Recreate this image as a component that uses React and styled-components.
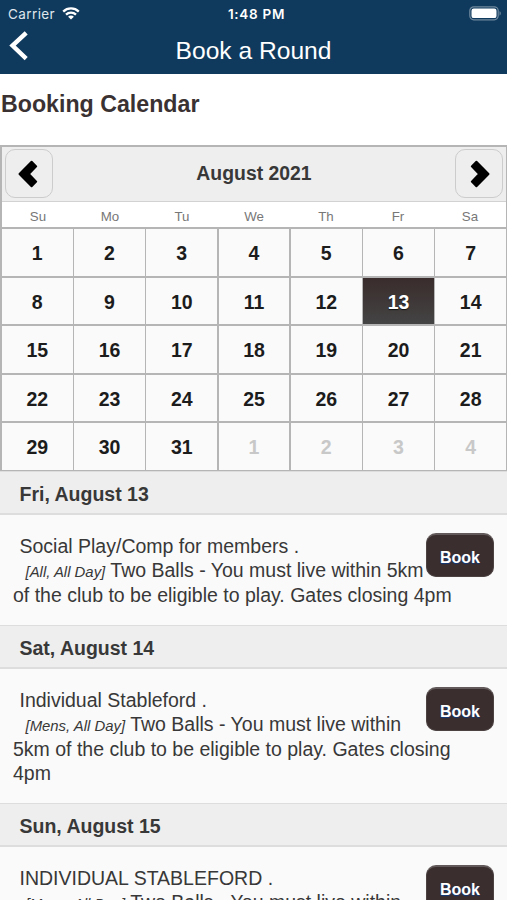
import React from 'react';
import styled, { createGlobalStyle } from 'styled-components';

const GlobalStyle = createGlobalStyle`
  * {
    box-sizing: border-box;
  }

  body {
    margin: 0;
    background: #fff;
    color: #383838;
    font-family: "Liberation Sans", Arial, sans-serif;
    font-size: 19.5px;
    overflow: hidden;
  }
`;

const weekDays = ['Su', 'Mo', 'Tu', 'We', 'Th', 'Fr', 'Sa'];

// 31 days of August and the first 4 days of September
const days = Array.from({ length: 35 }, (_, i) => ({
  number: i < 31 ? i + 1 : i - 30,
  other: i >= 31,
}));

const text = 'Two Balls - You must live within 5km of the club to be eligible to play. Gates closing 4pm';

const events = [
  { date: 'Fri, August 13', title: 'Social Play/Comp for members .', who: '[All, All Day]', text },
  { date: 'Sat, August 14', title: 'Individual Stableford .', who: '[Mens, All Day]', text },
  { date: 'Sun, August 15', title: 'INDIVIDUAL STABLEFORD .', who: '[Mens, All Day]', text },
];

function Wifi() {
  return (
    <svg width="18" height="13" viewBox="0 0 18 13" fill="none" stroke="#fff" strokeWidth="2.3">
      <path d="M1.2 4.6a11.2 11.2 0 0 1 15.6 0" />
      <path d="M4 7.6a7.2 7.2 0 0 1 10 0" />
      <path d="M9 12.6 6.1 9.8a3.9 3.9 0 0 1 5.8 0z" fill="#fff" stroke="none" />
    </svg>
  );
}

function Battery() {
  return (
    <svg width="33" height="15" viewBox="0 0 33 15">
      <rect x="0.8" y="0.8" width="28.4" height="13" rx="4" fill="none" stroke="#fff" strokeOpacity="0.4" strokeWidth="1.2" />
      <rect x="2.5" y="2.5" width="25" height="9.6" rx="2.2" fill="#fff" />
      <path d="M30.6 5.2v4.2c1.4-.5 1.4-3.7 0-4.2z" fill="#fff" fillOpacity="0.5" />
    </svg>
  );
}

function Arrow({ next }) {
  return (
    <svg width="20" height="28" viewBox="0 0 20 28" fill="#000" stroke="#000" strokeWidth="2" strokeLinejoin="round">
      <path
        d={next
          ? 'M18.5 14 6.4 1.8 1.8 6.4 9.2 14 1.8 21.6 6.4 26.2z'
          : 'M1.5 14 13.6 1.8 18.2 6.4 10.8 14 18.2 21.6 13.6 26.2z'}
      />
    </svg>
  );
}

function App() {
  return (
    <Page>
      <GlobalStyle />
      <Header>
        <StatusBar>
          <Carrier>
            Carrier <Wifi />
          </Carrier>
          <Clock>1:48 PM</Clock>
          <BatteryBox>
            <Battery />
          </BatteryBox>
        </StatusBar>
        <NavBar>
          <BackButton>
            <svg width="20" height="30" viewBox="0 0 20 30" fill="none" stroke="#fff" strokeWidth="4.4">
              <path d="M17.2 1.8 3.5 14.6 17.2 27.6" />
            </svg>
          </BackButton>
          <NavTitle>Book a Round</NavTitle>
        </NavBar>
      </Header>

      <Heading>Booking Calendar</Heading>

      <Calendar>
        <MonthBar>
          <MonthButton>
            <Arrow />
          </MonthButton>
          <Month>August 2021</Month>
          <MonthButton $next>
            <Arrow next />
          </MonthButton>
        </MonthBar>
        <WeekRow>
          {weekDays.map((day) => (
            <WeekDay key={day}>{day}</WeekDay>
          ))}
        </WeekRow>
        <DayGrid>
          {days.map((day, i) => (
            <Day key={i} $other={day.other} $selected={i === 12}>
              {day.number}
            </Day>
          ))}
        </DayGrid>
      </Calendar>

      {events.map((event) => (
        <section key={event.date}>
          <Divider>{event.date}</Divider>
          <Event>
            <BookButton>Book</BookButton>
            <EventTitle>{event.title}</EventTitle>
            <EventText>
              <em>{event.who}</em> {event.text}
            </EventText>
          </Event>
        </section>
      ))}
    </Page>
  );
}

export default App;

const Page = styled.div`
  width: 100%;
  height: 900px;
  overflow: hidden;
`;

const Header = styled.header`
  height: 74px;
  background: #103a5d;
  color: #fff;
`;

const StatusBar = styled.div`
  display: grid;
  grid-template-columns: 1fr auto 1fr;
  align-items: center;
  height: 27px;
  padding: 0 5px 0 8px;
  font-family: Inter, sans-serif;
  font-size: 13.5px;
`;

const Carrier = styled.div`
  display: flex;
  align-items: center;
  gap: 7px;
  letter-spacing: 0.4px;
  color: #dfe6ec;

  svg {
    margin-top: -1px;
  }
`;

const Clock = styled.div`
  font-weight: 600;
  font-size: 13.5px;
  letter-spacing: 0.7px;
  padding-left: 3px;
`;

const BatteryBox = styled.div`
  display: flex;
  justify-content: flex-end;
`;

const NavBar = styled.div`
  display: grid;
  grid-template-columns: 40px 1fr 40px;
  height: 47px;
`;

const BackButton = styled.div`
  padding: 4px 0 0 9px;
`;

const NavTitle = styled.div`
  text-align: center;
  font-size: 24.6px;
  line-height: 47px;
`;

const Heading = styled.h1`
  margin: 0;
  height: 71px;
  padding: 16px 0 0 1px;
  font-size: 23.2px;
  line-height: 28px;
  color: #3a3232;
`;

const Calendar = styled.div`
  border: 2px solid #b5b5b5;
  border-width: 2px 1px 0 2px;
`;

const MonthBar = styled.div`
  display: flex;
  align-items: center;
  justify-content: space-between;
  height: 55px;
  padding: 0 3px 1px;
  background: #eee;
  border-bottom: 1px solid #d2d2d2;
`;

const MonthButton = styled.div`
  display: flex;
  align-items: center;
  justify-content: center;
  width: 48px;
  height: 49px;
  padding: ${(props) => (props.$next ? '0 0 0 2px' : '0 3px 0 0')};
  border: 1px solid #ccc;
  border-radius: 10px;
`;

const Month = styled.div`
  font-weight: bold;
  font-size: 19.4px;
`;

const WeekRow = styled.div`
  display: grid;
  grid-template-columns: repeat(7, 1fr);
  height: 25px;
  background: #fff;
`;

const WeekDay = styled.div`
  text-align: center;
  font-size: 13.3px;
  line-height: 29px;
  color: #777;
`;

const DayGrid = styled.div`
  display: grid;
  grid-template-columns: repeat(7, 1fr);
  grid-auto-rows: 46.85px;
  gap: 1.7px;
  border: solid #b5b5b5;
  border-width: 2px 0 1px;
  background: #b5b5b5;
`;

const Day = styled.div`
  text-align: center;
  font-weight: bold;
  line-height: 49px;
  color: ${(props) => (props.$selected ? '#fff' : props.$other ? '#c8c8c8' : '#1c1c1c')};
  background: ${(props) => (props.$selected ? 'linear-gradient(#3a2c2c, #444)' : '#fafafa')};
  text-shadow: ${(props) => (props.$selected ? '0 1px 1px #111' : 'none')};
`;

const Divider = styled.div`
  height: 44px;
  padding-left: 19.5px;
  border-top: 1px solid #ddd;
  border-bottom: 2px solid #ddd;
  background: #eee;
  font-weight: bold;
  line-height: 44px;
`;

const Event = styled.div`
  display: flow-root;
  padding: 19px 13px 17.5px;
  background: #fafafa;
  line-height: 24.4px;
`;

const BookButton = styled.div`
  float: right;
  width: 68px;
  height: 44px;
  margin-top: -1px;
  border: 1px solid #4c4242;
  border-top: 2px solid #625a5a;
  border-radius: 10px;
  background: #3b2e2f;
  color: #fff;
  text-align: center;
  font-size: 16px;
  font-weight: bold;
  line-height: 45px;
  text-shadow: 0 1px 1px #103a7d;
`;

const EventTitle = styled.div`
  padding-left: 6.5px;
`;

const EventText = styled.div`
  padding-right: 10px;
  text-indent: 12.5px;

  em {
    font-size: 14.9px;
    line-height: 1;
  }
`;
